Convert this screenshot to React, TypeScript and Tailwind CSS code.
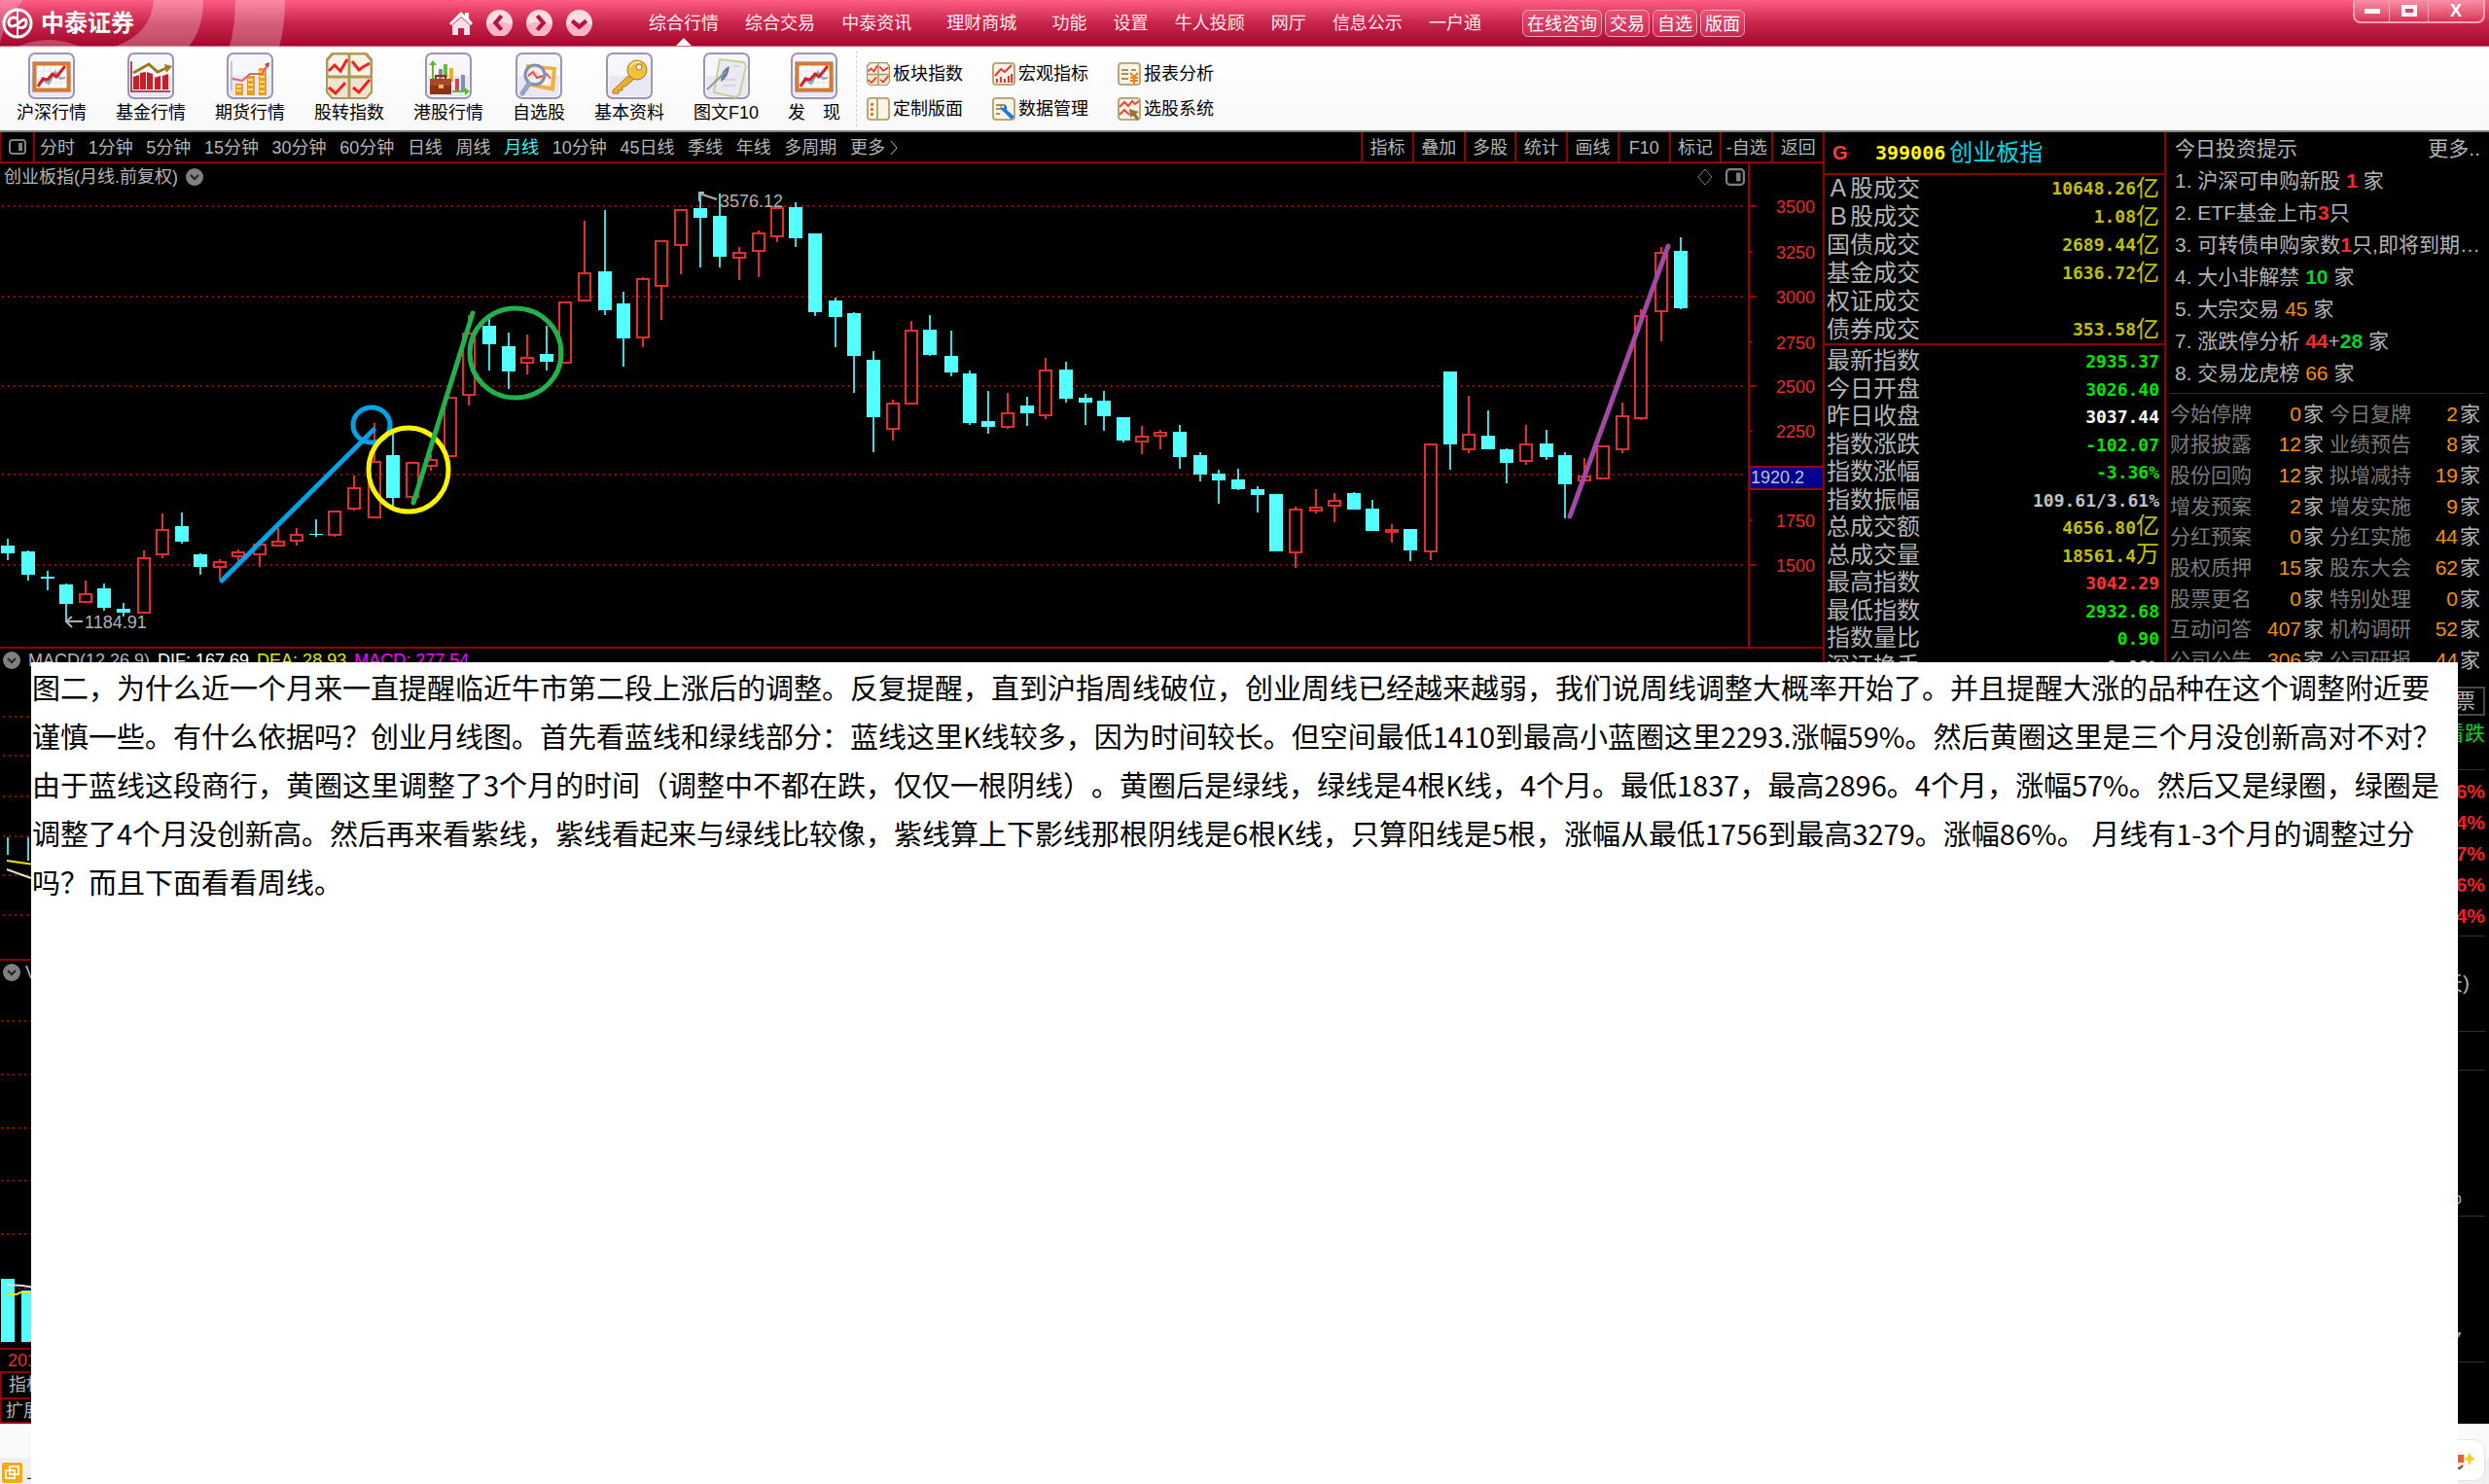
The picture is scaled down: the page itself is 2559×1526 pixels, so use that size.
import React from "react";

const NAV = ["综合行情", "综合交易", "中泰资讯", "理财商城", "功能", "设置", "牛人投顾", "网厅", "信息公示", "一户通"];
const PILLS = ["在线咨询", "交易", "自选", "版面"];
const PERIODS = ["分时", "1分钟", "5分钟", "15分钟", "30分钟", "60分钟", "日线", "周线", "月线", "10分钟", "45日线", "季线", "年线", "多周期"];
const TOOLS = ["指标", "叠加", "多股", "统计", "画线", "F10", "标记", "-自选", "返回"];

/* x centre, high, body top, body bottom, low, rising */
const CANDLES: [number, number, number, number, number, number][] = [
  [8, 554, 561, 569, 576, 0], [29, 566, 567, 591, 597, 0], [49, 587, 593, 595, 607, 0], [68, 600, 601, 621, 640, 0],
  [88, 597, 611, 619, 619, 1], [107, 600, 605, 625, 628, 0], [127, 620, 626, 630, 634, 0], [148, 566, 574, 630, 630, 1],
  [167, 528, 545, 570, 574, 1], [187, 527, 541, 557, 559, 0], [206, 569, 570, 583, 591, 0], [226, 575, 578, 583, 596, 1],
  [245, 565, 568, 572, 577, 1], [267, 556, 560, 570, 583, 1], [286, 543, 557, 561, 561, 1], [305, 543, 550, 556, 561, 1],
  [325, 534, 549, 550, 552, 0], [344, 526, 526, 550, 552, 1], [364, 489, 502, 523, 525, 1], [385, 435, 475, 532, 532, 1],
  [404, 443, 468, 512, 521, 0], [424, 476, 476, 511, 517, 1], [443, 467, 473, 479, 484, 1], [463, 409, 409, 469, 469, 1],
  [482, 324, 343, 406, 417, 1], [503, 327, 335, 354, 381, 0], [523, 342, 356, 382, 400, 0], [542, 344, 368, 373, 385, 1],
  [562, 335, 364, 372, 381, 0], [581, 311, 311, 373, 373, 1], [601, 227, 281, 309, 310, 1], [622, 216, 279, 319, 324, 0],
  [641, 300, 312, 348, 377, 0], [661, 285, 287, 347, 357, 1], [680, 248, 248, 294, 329, 1], [700, 216, 216, 252, 282, 1],
  [720, 198, 214, 224, 275, 0], [740, 199, 222, 264, 275, 0], [760, 254, 260, 265, 288, 1], [780, 237, 240, 258, 285, 1],
  [799, 214, 214, 243, 249, 1], [818, 208, 213, 245, 254, 0], [838, 240, 240, 321, 325, 0], [859, 306, 309, 326, 357, 0],
  [878, 321, 322, 366, 404, 0], [898, 361, 370, 429, 465, 0], [918, 411, 415, 441, 453, 1], [937, 330, 340, 415, 415, 1],
  [956, 324, 339, 365, 366, 0], [978, 340, 366, 383, 387, 0], [997, 381, 384, 435, 437, 0], [1016, 402, 433, 439, 446, 0],
  [1036, 404, 425, 439, 441, 1], [1056, 408, 417, 425, 438, 0], [1075, 368, 381, 427, 431, 1], [1096, 372, 380, 410, 414, 0],
  [1116, 405, 409, 414, 437, 0], [1135, 402, 412, 428, 443, 0], [1155, 429, 429, 453, 455, 0], [1174, 438, 449, 454, 467, 1],
  [1193, 442, 445, 448, 462, 1], [1213, 437, 444, 470, 482, 0], [1234, 465, 468, 488, 495, 0], [1253, 483, 487, 494, 518, 0],
  [1273, 482, 493, 503, 504, 0], [1293, 500, 503, 509, 527, 0], [1312, 508, 508, 567, 567, 0], [1332, 521, 524, 568, 584, 1],
  [1353, 503, 522, 525, 528, 1], [1372, 507, 515, 520, 537, 1], [1392, 506, 507, 524, 524, 0], [1411, 514, 523, 546, 546, 0],
  [1431, 539, 545, 547, 558, 1], [1450, 544, 544, 566, 577, 0], [1471, 457, 457, 567, 576, 1], [1491, 382, 382, 457, 483, 0],
  [1510, 407, 447, 462, 466, 1], [1530, 422, 448, 462, 462, 0], [1549, 461, 462, 476, 497, 0], [1569, 437, 457, 474, 478, 1],
  [1590, 442, 456, 470, 473, 0], [1609, 465, 468, 498, 533, 0], [1629, 471, 490, 494, 494, 1], [1648, 459, 459, 492, 492, 1],
  [1668, 414, 428, 462, 466, 1], [1687, 318, 325, 430, 432, 1], [1708, 254, 260, 320, 351, 1], [1728, 244, 258, 317, 318, 0],
];

const AXIS: [string, number, boolean][] = [
  ["3500", 212, true], ["3250", 259, false], ["3000", 305, true], ["2750", 352, false], ["2500", 397, true],
  ["2250", 443, false], ["1750", 535, false], ["1500", 581, true],
];

const TURNOVER: [string, string, string][] = [
  ["Ａ股成交", "10648.26", "亿"], ["Ｂ股成交", "1.08", "亿"], ["国债成交", "2689.44", "亿"],
  ["基金成交", "1636.72", "亿"], ["权证成交", "", ""], ["债券成交", "353.58", "亿"],
];

const QUOTE: [string, string, string, string][] = [
  ["最新指数", "2935.37", "", "text-[#00e600]"], ["今日开盘", "3026.40", "", "text-[#00e600]"], ["昨日收盘", "3037.44", "", "text-white"],
  ["指数涨跌", "-102.07", "", "text-[#00e600]"], ["指数涨幅", "-3.36%", "", "text-[#00e600]"], ["指数振幅", "109.61/3.61%", "", "text-[#c0c0c0]"],
  ["总成交额", "4656.80", "亿", "text-[#c0c000]"], ["总成交量", "18561.4", "万", "text-[#c0c000]"], ["最高指数", "3042.29", "", "text-[#ff3232]"],
  ["最低指数", "2932.68", "", "text-[#00e600]"], ["指数量比", "0.90", "", "text-[#00e600]"], ["深证换手", "0.00%", "", "text-[#c0c0c0]"],
];

const EVENTS: [string, string, string, string][] = [
  ["今始停牌", "0", "今日复牌", "2"], ["财报披露", "12", "业绩预告", "8"], ["股份回购", "12", "拟增减持", "19"],
  ["增发预案", "2", "增发实施", "9"], ["分红预案", "0", "分红实施", "44"], ["股权质押", "15", "股东大会", "62"],
  ["股票更名", "0", "特别处理", "0"], ["互动问答", "407", "机构调研", "52"], ["公司公告", "306", "公司研报", "44"],
];

const ARTICLE = [
  "图二，为什么近一个月来一直提醒临近牛市第二段上涨后的调整。反复提醒，直到沪指周线破位，创业周线已经越来越弱，我们说周线调整大概率开始了。并且提醒大涨的品种在这个调整附近要",
  "谨慎一些。有什么依据吗？创业月线图。首先看蓝线和绿线部分：蓝线这里K线较多，因为时间较长。但空间最低1410到最高小蓝圈这里2293.涨幅59%。然后黄圈这里是三个月没创新高对不对？",
  "由于蓝线这段商行，黄圈这里调整了3个月的时间（调整中不都在跌，仅仅一根阴线）。黄圈后是绿线，绿线是4根K线，4个月。最低1837，最高2896。4个月，涨幅57%。然后又是绿圈，绿圈是",
  "调整了4个月没创新高。然后再来看紫线，紫线看起来与绿线比较像，紫线算上下影线那根阴线是6根K线，只算阳线是5根，涨幅从最低1756到最高3279。涨幅86%。 月线有1-3个月的调整过分",
  "吗？而且下面看看周线。",
];

function Frame({ children }: { children: React.ReactNode }) {
  return (
    <svg className="size-12" viewBox="0 0 48 48" fill="none" aria-hidden="true">
      <rect x="1" y="1" width="46" height="46" rx="6" fill="#f7f6fb" stroke="#9c94b8" strokeWidth="2" />
      <path d="M3 24h42v16q0 5-5 5H8q-5 0-5-5z" fill="#e9e7f3" />
      {children}
    </svg>
  );
}

function BoardIcon() {
  return (
    <Frame>
      <rect x="7" y="12" width="34" height="26" fill="#fff" stroke="#d9782d" strokeWidth="3" />
      <rect x="5" y="10" width="38" height="30" stroke="#a4501a" strokeWidth="1" />
      <path d="M10 19h28M10 25h28M10 31h28M16 14v22M22 14v22M28 14v22M34 14v22" stroke="#dfe5ea" />
      <path d="M10 34l6-5 5 3 7-12 5 7 5-1" stroke="#7da5b8" strokeWidth="2" />
      <path d="M10 35l5-8 5 1 5-6 4 3 9-11" stroke="#d81e1e" strokeWidth="3" />
    </Frame>
  );
}

function FundIcon() {
  return (
    <Frame>
      <path d="M4 9v31h40" stroke="#a05058" strokeWidth="2" />
      <path d="M6 25l6-2v15H6zM13 21l6-1v18h-6zM20 20l6 2v16h-6zM28 26l6-2v14h-6zM36 24l6-2v16h-6z" fill="#c81e28" />
      <path d="M6 21l16-9 9 8 9-4" stroke="#9a7a18" strokeWidth="3" />
      <path d="M38 12l8 2-6 7z" fill="#9a7a18" />
    </Frame>
  );
}

function FuturesIcon() {
  return (
    <Frame>
      <path d="M5 9v30" stroke="#9a9aa8" />
      <path d="M9 32h8v12H9zM21 24h8v20h-8zM33 16h8v28h-8z" fill="#e8a020" />
      <path d="M10 35h5M10 39h5M22 28h5M22 33h5M22 38h5M34 20h5M34 25h5M34 30h5M34 35h5M34 40h5" stroke="#fbe08a" strokeWidth="2" />
      <path d="M6 27l10 2 8-7h12l6-9" stroke="#e06070" strokeWidth="2" />
      <path d="M39 12l5-2-1 6z" fill="#d03040" />
    </Frame>
  );
}

function FourIcon({ small = false }: { small?: boolean }) {
  return (
    <svg className={small ? "size-6" : "size-12"} viewBox="0 0 48 48" fill="none" aria-hidden="true">
      <path d="M7 1h34l6 7v32l-6 7H7l-6-7V8z" fill="#fbf3e6" stroke="#b09858" strokeWidth="3" />
      <path d="M2 26h44v14l-5 6H7l-5-6z" fill="#efe4d0" />
      <path d="M24 1v46M1 25h46" stroke="#b09858" strokeWidth="3" />
      <path d="M3 19l6-6 6 6 7-12M27 9l7 9 4-3 7-4M3 36l7 6 10-11M28 36l6 5 11-13" stroke="#f52020" strokeWidth="3" />
    </svg>
  );
}

function HongKongIcon() {
  return (
    <Frame>
      <path d="M8 28V11M28 40h15" stroke="#58c030" strokeWidth="2" />
      <path d="M4 13l4-5 4 5zM41 36l5 4-5 4z" fill="#58c030" />
      <path d="M14 17h4v10h-4z" fill="#808898" />
      <path d="M19 12h4v14h-4z" fill="#60c038" />
      <path d="M25 16h4v14h-4z" fill="#f0b018" />
      <path d="M31 27h4v12h-4z" fill="#e03858" />
      <path d="M37 23h4v16h-4z" fill="#8090b0" />
      <path d="M5 27h22v16H5z" fill="#8c3018" />
      <path d="M5 27h22v7H5z" fill="#a84828" />
      <path d="M11 27v-3h10v3" stroke="#8c3018" strokeWidth="2" />
      <rect x="14" y="33" width="5" height="4" fill="#f0c030" />
    </Frame>
  );
}

function WatchIcon() {
  return (
    <Frame>
      <path d="M11 12l31 3-2 25-29-6z" fill="#f0b040" />
      <path d="M15 16l23 2-2 17-21-4z" fill="#fbf4e6" />
      <path d="M16 25l6-4 4 6 6-5 4 5" stroke="#e06040" strokeWidth="2" />
      <circle cx="20" cy="23" r="10" fill="#e8eef8" fillOpacity=".8" stroke="#8090b0" strokeWidth="3" />
      <path d="M13 24l5-4 4 6 6-2" stroke="#e05040" strokeWidth="2" />
      <path d="M14 32L7 42" stroke="#8fa4c8" strokeWidth="5" strokeLinecap="round" />
    </Frame>
  );
}

function KeyIcon() {
  return (
    <Frame>
      <path d="M26 21L7 39v3h6v-3h4v-4h3l9-8z" fill="#e8b030" stroke="#a87818" strokeWidth="1" />
      <circle cx="32" cy="18" r="10" fill="#f0c040" stroke="#a87818" strokeWidth="1" />
      <path d="M25 15q3-6 10-5" stroke="#fbe48c" strokeWidth="2" />
      <circle cx="34" cy="15" r="3" fill="#f4f2fa" stroke="#a87818" />
    </Frame>
  );
}

function FeatherIcon() {
  return (
    <Frame>
      <path d="M17 7l25 3 2 4-7 30-4 2-22-5z" fill="#eceaf0" stroke="#c8d0a0" strokeWidth="2" />
      <path d="M22 28h12M20 34h14M31 14h6" stroke="#d8d4e4" strokeWidth="2" />
      <path d="M27 14q-9 3-9 16 8-4 9-16z" fill="#6c7ca4" />
      <path d="M24 19L4 38" stroke="#909890" strokeWidth="2" />
    </Frame>
  );
}

function SmallPage({ children }: { children: React.ReactNode }) {
  return (
    <svg className="size-6" viewBox="0 0 24 24" fill="none" aria-hidden="true">
      <rect x="1" y="1" width="22" height="22" rx="3" fill="#faf4e4" stroke="#b8a878" strokeWidth="2" />
      {children}
    </svg>
  );
}

const BIG_TOOLS: [string, React.ReactNode][] = [
  ["沪深行情", <BoardIcon />], ["基金行情", <FundIcon />], ["期货行情", <FuturesIcon />], ["股转指数", <FourIcon />],
  ["港股行情", <HongKongIcon />], ["自选股", <WatchIcon />], ["基本资料", <KeyIcon />], ["图文F10", <FeatherIcon />],
  ["发　现", <BoardIcon />],
];

const SMALL_TOOLS: [string, React.ReactNode][] = [
  ["板块指数", <FourIcon small />],
  ["宏观指标", <SmallPage><path d="M3 14l6-7 4 3 7-7M5 21v-4M9 21v-6M13 21v-4M17 21v-7M20 21v-9" stroke="#f03030" strokeWidth="2" /></SmallPage>],
  ["报表分析", <SmallPage><path d="M4 8h7M4 12h7M4 17h7M14 8h5" stroke="#a89058" strokeWidth="2" /><path d="M13 11l4 4 4-4M17 15v7M13 16h8M13 19h8" stroke="#f08020" strokeWidth="2" /></SmallPage>],
  ["定制版面", <SmallPage><path d="M11 1v22" stroke="#b8a878" strokeWidth="2" /><path d="M4 6h3v3H4zM4 11h3v3H4zM4 16h3v3H4z" fill="#f07820" /></SmallPage>],
  ["数据管理", <SmallPage><path d="M4 8h9M4 12h5M4 17h4" stroke="#a89058" strokeWidth="2" /><path d="M9 7q-2 5 3 8l8 8 3-3-8-7q1-4-2-6l-1 4-2 0z" fill="#1878f0" /></SmallPage>],
  ["选股系统", <SmallPage><path d="M2 10l5-5 4 4 4-5 3 3 4-3M2 18l5-5 5 5" stroke="#f04040" strokeWidth="2" /><path d="M12 12l10 3-3 2 3 5-2 2-4-5-3 2z" fill="#907838" /></SmallPage>],
];

function Chevron() {
  return (
    <svg className="size-[18px] shrink-0" viewBox="0 0 18 18" fill="none" aria-hidden="true">
      <circle cx="9" cy="9" r="9" fill="#808080" />
      <path d="M5 7l4 4 4-4" stroke="#222" strokeWidth="2" />
    </svg>
  );
}

function PanelGlyph({ className }: { className: string }) {
  return (
    <svg className={className} viewBox="0 0 18 18" fill="none" aria-hidden="true">
      <rect x="1" y="2" width="16" height="14" rx="3" stroke="currentColor" strokeWidth="2" />
      <path d="M10 5h4v8h-4z" fill="currentColor" />
    </svg>
  );
}

function Header() {
  return (
    <header className="relative flex h-12 items-center border-b border-[#d8607c] bg-linear-to-b from-[#ff5c84] via-[#c8244c] to-[#a8042c]">
      <svg className="absolute top-0 left-0 h-12 w-[300px]" viewBox="0 0 300 48" fill="none" aria-hidden="true">
        <path d="M209 0q0 30-15 48h-76q38-14 40-48zM242 0h51q0 28-6 48h-51q6-22 6-48z" fill="#fff" fillOpacity=".27" />
        <path d="M18 48q32-14 64 0zM0 0h24Q6 18 0 44z" fill="#fff" fillOpacity=".25" />
      </svg>
      <div className="relative flex w-[462px] items-center gap-2 pl-[2px]">
        <svg className="size-8" viewBox="0 0 32 32" fill="none" stroke="#fff" aria-hidden="true">
          <circle cx="16" cy="16" r="14" strokeWidth="3" />
          <path d="M16 2v28" strokeWidth="2" />
          <path d="M16 11q-8-3-9 4 0 7 9 2 9-9 9-2 0 7-9 5" strokeWidth="3" />
        </svg>
        <span className="text-2xl font-bold text-white">中泰证券</span>
      </div>
      <div className="relative flex w-[205px] items-center gap-[14px]">
        <button aria-label="首页">
          <svg className="size-6" viewBox="0 0 24 24" aria-hidden="true">
            <path d="M12 0l4 4V1h4v6l4 5-2 2-10-9L2 14l-2-2z" fill="#fff" />
            <path d="M3 14l9-8 9 8v10h-6v-7H9v7H3z" fill="#ffe0e8" />
          </svg>
        </button>
        {["M15 6l-6 7 6 7", "M11 6l6 7-6 7", "M6 11l7 6 7-6"].map((d, i) => (
          <button key={d} aria-label={["后退", "前进", "展开"][i]}>
            <svg className="size-[27px]" viewBox="0 0 26 26" fill="none" aria-hidden="true">
              <circle cx="13" cy="13" r="13" fill="#ffdbe3" />
              <path d="M1 15a12 12 0 0 0 24 0q-12-6-24 0z" fill="#ffb4c6" />
              <path d={d} stroke="#b4143c" strokeWidth="4" />
            </svg>
          </button>
        ))}
      </div>
      <nav className="flex h-full w-[856px] items-center justify-between text-[18px] text-[#ffe8ee]">
        {NAV.map((n, i) => (
          <a
            key={n}
            href="#"
            className={
              i === 0
                ? "relative flex h-full items-center pt-[2px] after:absolute after:bottom-0 after:left-1/2 after:-translate-x-1/2 after:border-x-8 after:border-b-8 after:border-x-transparent after:border-b-white"
                : i === 3
                  ? "mx-[9px] pt-[2px]"
                  : "pt-[2px]"
            }
          >
            {n}
          </a>
        ))}
      </nav>
      <div className="ml-[42px] flex gap-[3px]">
        {PILLS.map((p) => (
          <button key={p} className="h-7 rounded-md border border-[#f8a0b4] bg-linear-to-b from-[#ec5078] to-[#c82850] px-1 pt-[2px] text-[18px] leading-6 text-white">
            {p}
          </button>
        ))}
      </div>
      <div className="mr-1 ml-auto flex h-6 self-start overflow-hidden rounded-b-lg border-2 border-t-0 border-[#f8a0b4] bg-linear-to-b from-[#f890a8] to-[#d83058] text-white">
        <button aria-label="最小化" className="flex w-9 items-center justify-center border-r border-[#f8a0b4]"><i className="h-[5px] w-4 bg-white" /></button>
        <button aria-label="最大化" className="flex w-10 items-center justify-center border-r border-[#f8a0b4]"><i className="h-3 w-4 border-4 border-white bg-[#e04068]" /></button>
        <button aria-label="关闭" className="w-14 text-[18px] leading-5 font-bold">X</button>
      </div>
    </header>
  );
}

function Toolbar() {
  return (
    <div className="flex h-[88px] border-b-2 border-[#808080] bg-linear-to-b from-white to-[#f8f8f8] text-[18px] text-black">
      <div className="flex gap-[30px] pt-[6px] pl-[17px]">
        {BIG_TOOLS.map(([label, icon]) => (
          <button key={label} className="flex flex-col items-center whitespace-nowrap">
            {icon}
            <span className="leading-7">{label}</span>
          </button>
        ))}
      </div>
      <div className="my-1 ml-4 border-l border-dashed border-[#c8d4f0]" />
      <div className="ml-[10px] grid grid-cols-3 content-center gap-x-[30px] gap-y-3 pt-[6px]">
        {SMALL_TOOLS.map(([label, icon]) => (
          <button key={label} className="flex items-center gap-[3px] leading-6 whitespace-nowrap">
            {icon}
            {label}
          </button>
        ))}
      </div>
    </div>
  );
}

function PeriodBar() {
  return (
    <div className="flex h-8 items-center border-b-2 border-[#900000] text-[18px] whitespace-nowrap">
      <button aria-label="侧栏" className="flex h-full w-9 items-center justify-center border-r-2 border-l border-[#900000] text-[#808080]">
        <PanelGlyph className="size-[18px]" />
      </button>
      <div className="ml-[5px] flex w-[883px] justify-between pt-[2px]">
        {PERIODS.map((p) => (
          <button key={p} className={p === "月线" ? "text-[#3cf0f0]" : "text-[#b4b4b4]"}>{p}</button>
        ))}
        <button className="flex items-center gap-1">
          更多
          <svg className="h-[18px] w-[10px]" viewBox="0 0 10 18" fill="none" aria-hidden="true"><path d="M2 2l6 7-6 7" stroke="#c0c0c0" /></svg>
        </button>
      </div>
      <div className="ml-auto flex h-full w-[475px]">
        {TOOLS.map((t) => (
          <button key={t} className="min-w-0 flex-1 border-l-2 border-[#900000] pt-[2px]">{t}</button>
        ))}
      </div>
    </div>
  );
}

function KLine() {
  return (
    <div className="relative border-b-2 border-[#900000]">
      <div className="absolute top-0 left-1 flex h-7 items-center gap-2 text-[18px]">
        创业板指(月线.前复权)
        <Chevron />
      </div>
      <div className="absolute top-0 right-20 flex h-7 items-center gap-3 text-[#808080]">
        <svg className="size-[18px]" viewBox="0 0 18 18" fill="none" aria-hidden="true"><path d="M9 1l7 8-7 8-7-8z" stroke="currentColor" /></svg>
        <PanelGlyph className="size-5" />
      </div>
      <svg className="block w-full" viewBox="0 168 1874 497" fill="none" fontFamily="Liberation Sans, sans-serif" fontSize="18">
        {[212, 305, 397, 488, 581].map((y) => (
          <path key={y} d={`M2 ${y}H1792`} stroke="#a00000" strokeWidth="2" strokeDasharray="2 4" />
        ))}
        {CANDLES.map(([x, hi, top, bot, lo, up]) =>
          up ? (
            <g key={x} stroke="#e62d2d" strokeWidth="2">
              <path d={`M${x} ${hi}V${top}M${x} ${bot}V${lo}`} />
              <rect x={x - 6} y={top} width="12" height={bot - top} />
            </g>
          ) : (
            <g key={x} fill="#54ffff">
              <rect x={x - 1} y={hi} width="2" height={lo - hi} fill="#40d8d8" />
              <rect x={x - 7} y={top} width="14" height={bot - top} />
            </g>
          ),
        )}
        <path d="M74 634l-6 5 6 6M68 639h17M724 198l-5 0v9M719 199l18 6" stroke="#b0b0b0" strokeWidth="2" />
        <text x="87" y="646" fill="#b0b0b0">1184.91</text>
        <text x="740" y="213" fill="#b0b0b0">3576.12</text>
        <g strokeWidth="5" strokeLinecap="round">
          <path d="M228 597L384 442" stroke="#00a2e8" />
          <ellipse cx="382" cy="437" rx="19" ry="18" stroke="#00a2e8" />
          <ellipse cx="420" cy="483" rx="41" ry="43" stroke="#fff200" />
          <path d="M425 517L486 322" stroke="#22b14c" />
          <ellipse cx="530" cy="363" rx="47" ry="46" stroke="#22b14c" />
          <path d="M1614 531L1715 253" stroke="#a349a4" />
        </g>
        <path d="M1798 168V665" stroke="#a00000" strokeWidth="2" />
        {AXIS.map(([t, y, major]) => (
          <g key={t}>
            <path d={`M1798 ${y}h${major ? 8 : 4}`} stroke="#a00000" strokeWidth="2" />
            <text x="1866" y={y + 7} textAnchor="end" fill="#e62d2d">{t}</text>
          </g>
        ))}
        <path d="M1799 480h76v23h-76z" fill="#000090" stroke="#a00000" strokeWidth="2" />
        <text x="1800" y="497" fill="#c0c0c0">1920.2</text>
      </svg>
    </div>
  );
}

function Macd() {
  return (
    <div className="relative h-[321px] border-b-2 border-[#900000] pl-[3px]">
      <div className="flex h-6 items-center gap-2 text-[18px] whitespace-nowrap">
        <Chevron />
        <span>MACD(12,26,9)</span>
        <span className="text-white">DIF: 167.69</span>
        <span className="text-[#e6e600]">DEA: 28.93</span>
        <span className="text-[#ff00ff]">MACD: 277.54</span>
      </div>
      <svg className="block h-[294px] w-9" viewBox="0 690 36 294" fill="none" aria-hidden="true">
        <path d="M0 736h36M0 776h36M0 818h36M0 859h36M0 899h36M0 940h36" stroke="#a00000" strokeWidth="2" strokeDasharray="2 4" />
        <path d="M5 860v18M26 860v24" stroke="#40d8d8" strokeWidth="2" />
        <path d="M4 884l14 2 14 2" stroke="#e6e600" strokeWidth="2" />
        <path d="M4 893l25 9" stroke="#e0e0e0" strokeWidth="2" />
      </svg>
    </div>
  );
}

function Volume() {
  return (
    <div className="h-[400px] border-b-2 border-[#900000]">
      <div className="flex h-6 items-center gap-[5px] pl-[3px] text-[18px]">
        <Chevron />
        <span>VOL</span>
      </div>
      <svg className="block h-[374px] w-9" viewBox="0 1011 36 374" fill="none" aria-hidden="true">
        <path d="M1 1049h35M1 1104h35M1 1159h35M1 1213h35M1 1268h35M1 1324h35" stroke="#a00000" strokeWidth="2" strokeDasharray="2 4" />
        <path d="M1 1314h14v65H1zM22 1326h14v53H22z" fill="#54ffff" />
        <path d="M7 1320l16 1 13 2" stroke="#e0e0e0" strokeWidth="2" />
        <path d="M7 1330h10l4-2h12" stroke="#e6e600" strokeWidth="2" />
      </svg>
    </div>
  );
}

function QuotePanel() {
  return (
    <section className="flex w-[353px] shrink-0 flex-col border-x-2 border-[#900000] text-[24px] text-[#b4b4b4]">
      <h2 className="flex h-11 items-center border-b-2 border-[#900000] pl-1 font-normal">
        <span className="w-12 pl-1 text-[20px] font-bold text-[#ff3c3c]">G</span>
        <span className="mr-1 font-['DejaVu_Sans_Mono'] text-[20px] font-bold text-[#ffff00]">399006</span>
        <span className="text-[#00d8e6]">创业板指</span>
      </h2>
      <dl className="grid h-[175px] auto-rows-fr border-b-2 border-[#900000] pr-[5px] pl-[2px]">
        {TURNOVER.map(([k, v, u]) => (
          <div key={k} className="flex items-center justify-between leading-7">
            <dt>{k}</dt>
            <dd className="flex items-center text-[#c0c000]">
              <span className="font-['DejaVu_Sans_Mono'] text-[18px] font-bold">{v}</span>
              {u}
            </dd>
          </div>
        ))}
      </dl>
      <dl className="mt-[2px] grid h-[342px] auto-rows-fr pr-[5px] pl-[2px]">
        {QUOTE.map(([k, v, u, c]) => (
          <div key={k} className="flex items-center justify-between leading-7">
            <dt>{k}</dt>
            <dd className={c}>
              <span className="font-['DejaVu_Sans_Mono'] text-[18px] font-bold">{v}</span>
              {u}
            </dd>
          </div>
        ))}
      </dl>
    </section>
  );
}

function Red({ children }: { children: React.ReactNode }) {
  return <b className="text-[#ff2828]">{children}</b>;
}

function TipsPanel() {
  return (
    <section className="flex w-[332px] shrink-0 flex-col px-1 text-[21px] text-[#b4b4b4]">
      <div className="flex h-[33px] items-center justify-between pr-[5px] pl-[5px]">
        <h2>今日投资提示</h2>
        <a href="#">更多..</a>
      </div>
      <ul className="border-b border-[#303030] pb-1 pl-[5px] leading-[33px] whitespace-nowrap">
        <li>1. 沪深可申购新股 <Red>1</Red> 家</li>
        <li>2. ETF基金上市<Red>3</Red>只</li>
        <li>3. 可转债申购家数<Red>1</Red>只,即将到期…</li>
        <li>4. 大小非解禁 <b className="text-[#00d820]">10</b> 家</li>
        <li>5. 大宗交易 <span className="text-[#f79000]">45</span> 家</li>
        <li>7. 涨跌停分析 <Red>44</Red>+<b className="text-[#00d820]">28</b> 家</li>
        <li>8. 交易龙虎榜 <span className="text-[#f79000]">66</span> 家</li>
      </ul>
      <table className="mt-[5px] h-[285px] w-full table-fixed leading-7 whitespace-nowrap">
        <tbody>
          {EVENTS.map(([a, n, b, m]) => (
            <tr key={a}>
              <th scope="row" className="w-[84px] p-0 text-left font-normal text-[#787878]">{a}</th>
              <td className="w-[74px] p-0 text-right"><span className="mr-[2px] text-[#f79000]">{n}</span>家</td>
              <th scope="row" className="w-[90px] p-0 pl-[6px] text-left font-normal text-[#787878]">{b}</th>
              <td className="p-0 pr-[5px] text-right"><span className="mr-[2px] text-[#f79000]">{m}</span>家</td>
            </tr>
          ))}
        </tbody>
      </table>
      <div className="flex flex-col items-end text-right">
        <button className="mt-[11px] h-[30px] w-[300px] border-2 border-[#484848] pr-2 text-right leading-6">股票</button>
        <span className="mt-[2px] leading-8 text-[#00d820]">看跌</span>
      </div>
      <ul className="mt-[21px] border-y border-[#303030] pt-[6px] pb-1 text-right leading-[32px] font-bold text-[#f02020]">
        {["0.06%", "0.04%", "0.07%", "0.06%", "0.04%"].map((v, i) => (
          <li key={i}>{v}</li>
        ))}
      </ul>
      <p className="h-[98px] border-b border-[#303030] pt-8 pr-4 text-right">(天)</p>
      <div className="h-10 border-b border-[#303030]" />
      <p className="flex h-[150px] items-end justify-end border-b border-[#303030] pr-6 pb-1">%</p>
      <p className="flex h-[150px] items-end justify-end border-b border-[#303030] pr-6 pb-2">7</p>
    </section>
  );
}

function Footer() {
  return (
    <footer className="flex h-[63px] items-end justify-between bg-linear-to-b from-[#fafafa] from-55% to-[#f0f0f0] to-55%">
      <div className="flex items-center gap-1 pb-[2px] pl-[2px] text-[18px] leading-[22px] text-[#303030]">
        <svg className="size-[21px]" viewBox="0 0 21 21" fill="none" aria-hidden="true">
          <rect width="21" height="21" rx="2" fill="#f5a820" />
          <path d="M8 4h9v8H8zM4 8h9v8H4z" fill="#f5a820" stroke="#fff4d8" strokeWidth="2" />
        </svg>
        上证
      </div>
      <div className="mr-1 mb-1 flex h-[43px] w-20 items-center justify-end rounded-xl border border-[#e4e4e4] bg-white pr-[10px]">
        <svg className="h-7 w-[34px]" viewBox="0 0 34 28" aria-hidden="true">
          <path d="M2 8q12-9 22 0v12q-10 9-22 0z" fill="#fbe8e0" />
          <path d="M14 8h9v8h-6l-3-3z" fill="#e86030" />
          <path d="M14 21l5 1 3-3" fill="none" stroke="#804030" strokeWidth="2" />
          <path d="M29 5l2 5 4 2-4 2-2 5-2-5-4-2 4-2z" fill="#f8d020" />
        </svg>
      </div>
    </footer>
  );
}

export default function App() {
  return (
    <div className="relative flex min-h-screen flex-col overflow-hidden bg-black font-['Liberation_Sans','Noto_Sans_CJK_SC',sans-serif] text-[#b4b4b4]">
      <Header />
      <Toolbar />
      <main className="flex">
        <div className="min-w-0 flex-1">
          <PeriodBar />
          <KLine />
          <Macd />
          <Volume />
          <div className="h-[22px] pl-2 text-[18px] leading-[22px] text-[#e62d2d]">2018年</div>
          <div className="h-[27px] border-t-2 border-l-2 border-[#900000] pl-[7px] text-[18px] leading-6">指标</div>
          <div className="h-[27px] border-y-2 border-l-2 border-[#900000] pl-1 text-[18px] leading-6">扩展</div>
        </div>
        <QuotePanel />
        <TipsPanel />
      </main>
      <Footer />
      <article className="absolute inset-x-8 top-[681px] bottom-0 bg-white pl-px font-['Noto_Sans_CJK_SC',sans-serif] text-[29px] leading-[50px] whitespace-nowrap text-black [text-spacing-trim:space-all]">
        {ARTICLE.map((line) => (
          <p key={line}>{line}</p>
        ))}
      </article>
    </div>
  );
}
